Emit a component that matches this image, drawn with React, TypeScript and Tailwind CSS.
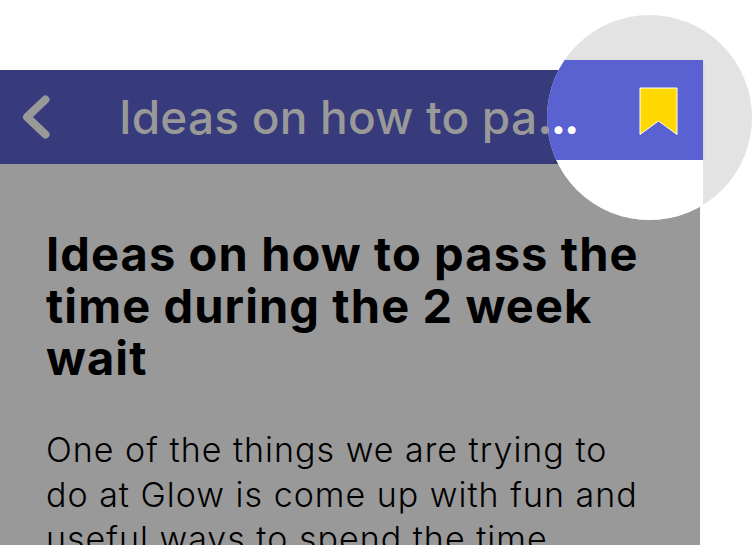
export default function App() {
  return (
    <div
      className="relative h-[545px] w-[753px] overflow-hidden bg-white"
      style={{ fontFamily: '"Inter", "Open Sans", sans-serif' }}
    >
      <div className="w-[700px] pt-[70px]">
        <header className="flex h-[94px] items-center bg-[#373a7b] shadow-sm">
          <svg className="ml-[22px] h-[44px] w-[28px] shrink-0" viewBox="0 0 28 44" fill="none">
            <path
              d="M23.5 4.5 L5 22 L23.5 39.5"
              stroke="#999999"
              strokeWidth="8"
              strokeLinecap="round"
              strokeLinejoin="round"
            />
          </svg>
          <div className="relative z-10 ml-[69px] whitespace-nowrap text-[46px] font-medium leading-none tracking-[0.2px] text-[#999999]">
            Ideas on how to pa
            <span className="font-bold tracking-[-2px]">.</span>
            <span className="font-bold tracking-[-2px] text-white">..</span>
          </div>
        </header>

        <main className="h-[400px] bg-[#999999] px-[46px] pt-[64px] text-black">
          <h1 className="w-[610px] text-[47px] font-bold leading-[52px] tracking-[1.1px]">
            Ideas on how to pass the time during the 2 week wait
          </h1>
          <p className="mt-[44px] w-[600px] text-[34px] font-light leading-[44.5px] tracking-[1px]">
            One of the things we are trying to do at Glow is come up with fun and useful ways to spend the time
          </p>
        </main>
      </div>

      {/* magnifier over the bookmark button */}
      <div className="absolute left-[547px] top-[15px] h-[205px] w-[205px] overflow-hidden rounded-full bg-[#e3e3e3]">
        <div className="mt-[45px] w-[156px]">
          <div className="flex h-[100px] items-start justify-end bg-[#5a62d1] pr-[25px] pt-[27px] shadow-sm">
            <svg className="h-[49px] w-[39px]" viewBox="0 0 39 49">
              <path d="M1 1 H38 V47.5 L19.5 34 L1 47.5 Z" fill="#ffd800" stroke="#ffffff" strokeWidth="1" />
            </svg>
          </div>
          <div className="h-[60px] bg-white" />
        </div>
      </div>
    </div>
  );
}
